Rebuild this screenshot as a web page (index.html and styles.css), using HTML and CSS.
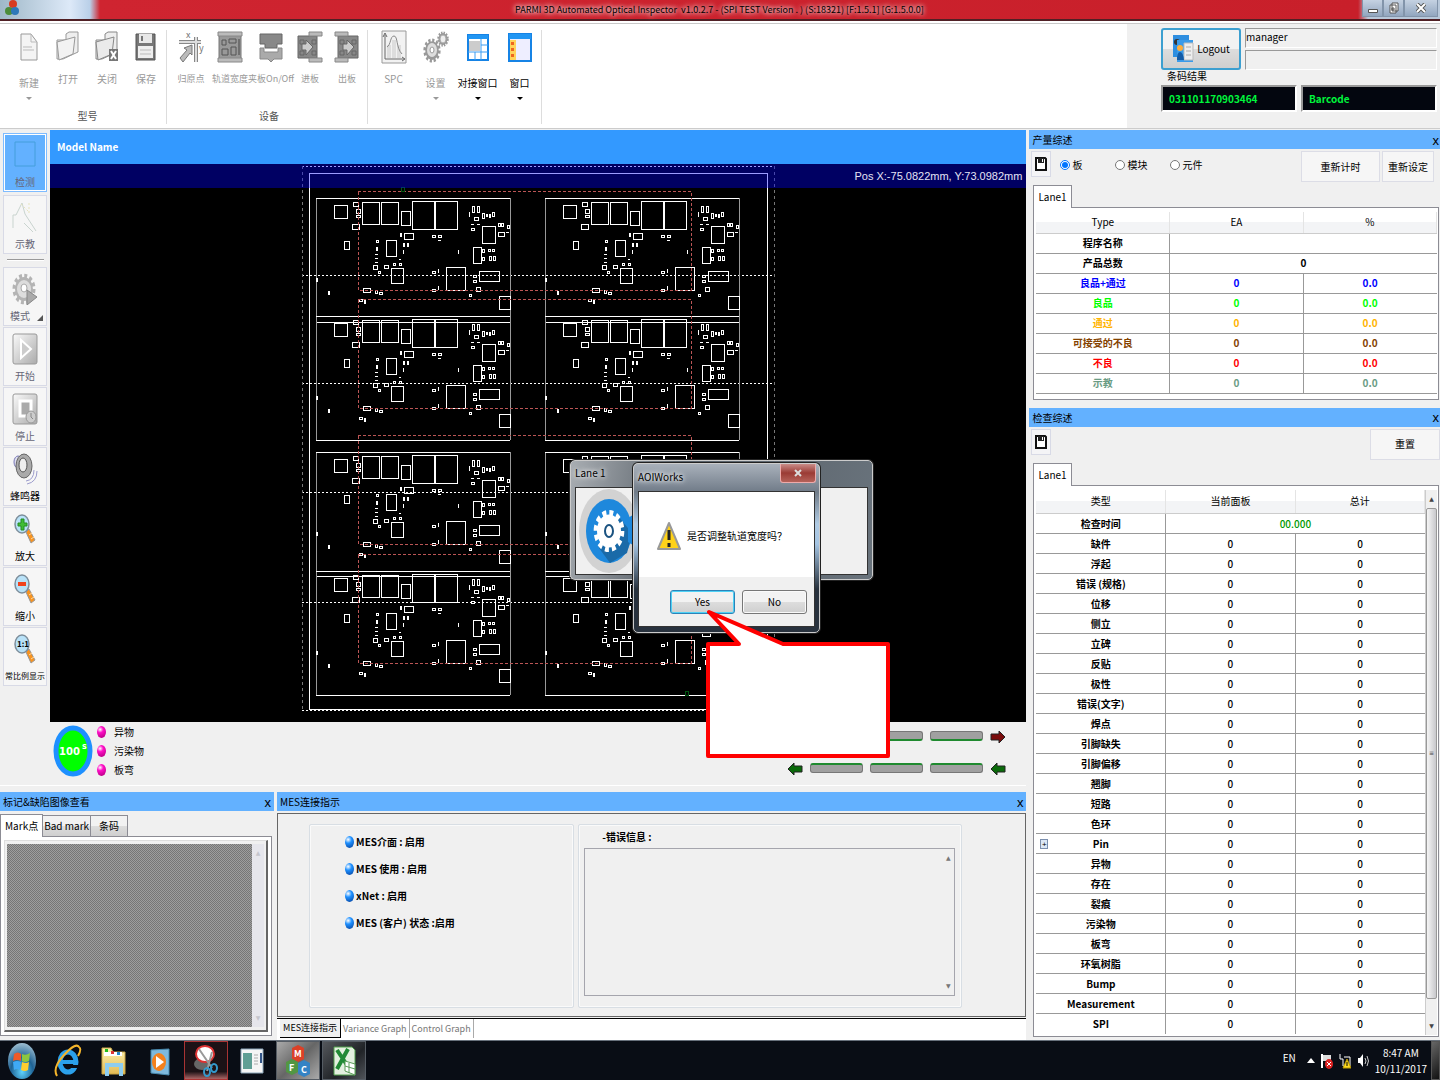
FILE: index.html
```html
<!DOCTYPE html>
<html lang="zh-CN">
<head>
    <meta charset="UTF-8">
    <title>PARMI 3D Automated Optical Inspector</title>
    <link rel="stylesheet" href="styles.css">
</head>
<body>
    <svg class="defs" aria-hidden="true">
        <defs>
            <linearGradient id="gray" x1="0" y1="0" x2="1" y2="1"><stop offset="0" stop-color="#fafafa"/><stop offset="1" stop-color="#aaa"/></linearGradient>
            <linearGradient id="folder" x1="0" y1="0" x2="0" y2="1"><stop offset="0" stop-color="#fff3b0"/><stop offset="1" stop-color="#e3bb55"/></linearGradient>
            <radialGradient id="orb" cx=".5" cy=".8" r=".8"><stop offset="0" stop-color="#5fd4ff"/><stop offset=".5" stop-color="#1e6294"/><stop offset="1" stop-color="#9dbdd0"/></radialGradient>
            <symbol id="gear" viewBox="0 0 24 24" preserveAspectRatio="none">
                <circle cx="12" cy="12" r="9.5" fill="none" stroke-width="4" stroke-dasharray="2.8 2.17" stroke="currentColor"/>
                <circle cx="12" cy="12" r="6" fill="none" stroke-width="6" stroke="currentColor"/>
            </symbol>
            <symbol id="lens" viewBox="0 0 22 30">
                <path d="M12 18l3-3 6 11-4 3z" fill="#f79320" stroke="#999" />
                <path d="M15 21l3-2M17 25l3-2" stroke="#ffd9a0"/>
                <ellipse cx="8" cy="10" rx="7" ry="9" fill="#b9e2f8" stroke="#7d8e9b" stroke-width="1.500"/>
            </symbol>
            <symbol id="disk" viewBox="0 0 12 16">
                <path d="M1 2h9l1 1v11H1z" fill="#fff" stroke="#111" stroke-width="2"/>
                <path d="M3 2h6v5H3z" fill="#222"/><path d="M7 3h1v3H7z" fill="#fff"/>
            </symbol>
            <!-- one board module, repeated over the panel -->
            <g id="module" fill="none" stroke="#fff">
                <path stroke="#999" d="M316 198v124M510 198v124"/>
                <path d="M316 198h194M316 322h194"/>
                <path d="M334 205h13v13h-13zM353 202h5v4h-5zM356 209h4v4h-4zM356 215h4v2h-4zM352 224h7v5h-7zM362 202h17v22h-17zM381 202h17v22h-17zM401 211h9v14h-9zM412 201h22v28h-22zM435 201h22v28h-22zM404 233h9v6h-9zM400 233h1v3h-1zM386 240h10v16h-10zM344 241h5v8h-5z"/>
                <path d="M376 240h2v2h-2zM376 247h1v3h-1zM375 254h3M375 258h3M375 262h3M373 265h4v4h-4zM384 265h4v3h-4zM378 271h2v2h-2zM393 263h2v2h-2zM399 259h2M399 263h2v2h-2zM391 268h12v15h-12zM403 243h1v3h-1zM407 243h1v3h-1zM403 250v4M432 235h3v2h-3zM438 235h3v2h-3zM438 240h3M458 250v4"/>
                <path d="M469 212v5M472 206h2v6h-2zM477 206h2v6h-2zM474 217h4v3h-4zM482 213h2v5h-2zM486 214h1v2h-1zM489 214h1v3h-1zM492 212h2v4h-2zM471 224h3M477 224h3M471 228h3v2h-3zM482 226h13v17h-13zM498 223h2v3h-2zM501 223h2v3h-2zM498 232h6v4h-6zM507 225h2v3h-2zM506 232h3"/>
                <path d="M473 247h8v16h-8zM482 249h2v3h-2zM488 249h2v2h-2zM492 249h2v2h-2zM482 257h2v3h-2zM489 256h2v4h-2zM493 256h2v4h-2zM479 271h20v10h-20zM473 275h3v2h-3zM473 280h3v2h-3zM446 267h19v23h-19zM432 271h3v2h-3zM438 269v4M432 289h3v2h-3zM438 286v4M476 287h4v4h-4zM469 294h2v2h-2zM499 296h11v13h-11z"/>
                <path d="M363 288h7v4h-7zM375 290h2v3h-2zM379 292h3v2h-3zM359 299h3v2h-3zM364 300h1v3h-1zM316 278h1v3h-1zM328 291h1v3h-1z"/>
            </g>
            <symbol id="arrow" viewBox="0 0 16 12"><path d="M1 3h8V0l6 6-6 6V9H1z" fill="currentColor" stroke="#222"/></symbol>
        </defs>
    </svg>

    <header class="titlebar">
        <svg class="app-logo" width="14" height="16"><circle cx="8" cy="4" r="4" fill="#d83c20"/><circle cx="4" cy="11" r="4" fill="#4c8c3a"/><circle cx="10" cy="11" r="4" fill="#2e78b8"/></svg>
        <h1>PARMI 3D Automated Optical Inspector &nbsp;v1.0.2.7 - (SPI TEST Version . ) (S:18321) [F:1.5.1] [G:1.5.0.0]</h1>
        <div class="window-buttons">
            <button aria-label="Minimize"><svg width="10" height="10"><path d="M.5 6.500h9v3h-9z" fill="#fff" stroke="#555"/></svg></button>
            <button aria-label="Restore"><svg width="10" height="12"><path d="M3 1h6v8H3zM1 3h6v8H1zM3 6h2v2H3z" fill="#fff" stroke="#555"/></svg></button>
            <button class="wide" aria-label="Close"><svg width="10" height="10"><path d="M1 1l8 8M9 1l-8 8" stroke="#555" stroke-width="4"/><path d="M1 1l8 8M9 1l-8 8" stroke="#fff" stroke-width="2"/></svg></button>
        </div>
    </header>

    <div class="ribbon">
        <div class="ribbon-group">
            <div class="tools">
                <button class="tool drop" disabled><svg width="24" height="34"><path d="M4 4h10l6 8v18H4z" fill="#f4f4f4" stroke="#999"/><path d="M14 4v8h6M6 17h9M6 20h11" fill="none" stroke="#bbb"/></svg>新建</button>
                <button class="tool" disabled><svg width="24" height="34"><path d="M1 10h9V4l3-2h9v20L7 29H1z" fill="#eee" stroke="#999"/><path d="M1 12l18-5-2 17L3 30z" fill="#f2f2f2" stroke="#999"/></svg>打开</button>
                <button class="tool" disabled><svg width="24" height="34"><path d="M1 10h9V4l3-2h9v20L7 29H1z" fill="#eee" stroke="#888"/><path d="M1 12l18-5-2 17L3 30z" fill="#eaeaea" stroke="#888"/><path d="M14 19h9v12h-9z" fill="#777"/><path d="M16 21l5 8M21 21l-5 8" stroke="#fff" stroke-width="2"/></svg>关闭</button>
                <button class="tool" disabled><svg width="24" height="34"><path d="M2 4h19v26H2z" fill="#777" stroke="#555"/><path d="M5 4h13v9H5z" fill="#e8e8e8"/><path d="M7 6h2v5H7z" fill="#777"/><path d="M4 16h15v12H4z" fill="#eee"/><path d="M6 20h11M6 24h11" stroke="#bbb"/></svg>保存</button>
            </div>
            <h2>型号</h2>
        </div>
        <div class="ribbon-group devices">
            <div class="tools">
                <button class="tool" disabled><svg width="26" height="34"><path d="M1 12h22M18 7v25" stroke="#888" stroke-width="4"/><path d="M1 12h22M18 7v25" stroke="#ddd" stroke-width="2"/><path d="M2 28l7-8-3-2 8-3v10l-2-2-7 9z" fill="#bbb" stroke="#777"/><text x="8" y="8" class="axis">x</text><text x="21" y="21" class="axis">y</text></svg>归原点</button>
                <button class="tool" disabled><svg width="26" height="34"><path d="M2 5h22v25H2z" fill="#999" stroke="#777"/><path d="M1 2h24v4H1zM1 28h24v4H1z" fill="#bbb" stroke="#888"/><path d="M5 10h4v5H5zM12 9h7v4h-7zM5 19h6v6H5zM14 17h5v8h-5z" fill="none" stroke="#555"/><path d="M22 9v16" stroke="#444"/></svg>轨道宽度</button>
                <button class="tool" disabled><svg width="26" height="34"><path d="M2 4h22v10h-5v4H7v-4H2z" fill="#888" stroke="#666"/><path d="M2 18h4v4h14v-4h4v11h-8l-3 3-3-3H2z" fill="#aaa" stroke="#888"/></svg>夹板On/Off</button>
                <button class="tool" disabled><svg width="26" height="34"><path d="M1 6h19v22H1z" fill="#888" stroke="#666"/><path d="M12 2h13v4H12zM12 28h13v4H12z" fill="#bbb" stroke="#888"/><path d="M3 10h4v4H3zM15 10h4v4h-4zM3 21h4v4H3zM15 21h4v4h-4z" fill="none" stroke="#666"/><path d="M5 14h4v-4l7 7-7 8v-5H5z" fill="#ccc" stroke="#666"/></svg>进板</button>
                <button class="tool" disabled><svg width="26" height="34"><path d="M4 6h20v22H4z" fill="#888" stroke="#666"/><path d="M1 2h13v4H1zM1 28h13v4H1z" fill="#bbb" stroke="#888"/><path d="M6 10h4v4H6zM18 10h4v4h-4zM6 21h4v4H6zM18 21h4v4h-4z" fill="none" stroke="#666"/><path d="M9 14h4v-4l7 7-7 8v-5H9z" fill="#ccc" stroke="#666"/></svg>出板</button>
            </div>
            <h2>设备</h2>
        </div>
        <div class="ribbon-group">
            <div class="tools">
                <button class="tool" disabled><svg width="26" height="34"><path d="M1 1h24v32H1z" fill="#f2f2f2" stroke="#999"/><path d="M4 5v24h19" fill="none" stroke="#666"/><path d="M2 7l2-4 2 4M21 27l3 2-3 2" fill="none" stroke="#666"/><path d="M6 15h4v13H6zM11 10h4v18h-4zM16 15h4v13h-4z" fill="#ddd"/><path d="M6 17c4-2 3-11 7-11s2 12 8 18" fill="none" stroke="#888"/></svg>SPC</button>
                <button class="tool drop" disabled><svg width="26" height="34" color="#999"><use href="#gear" x="0" y="8" width="18" height="25"/><use href="#gear" x="14" y="1" width="12" height="16"/><ellipse cx="9" cy="20" rx="5" ry="7" fill="#ddd"/><ellipse cx="9" cy="20" rx="2" ry="3" fill="#fff" stroke="#999"/><ellipse cx="20" cy="9" rx="3" ry="4" fill="#eee" stroke="#aaa"/></svg>设置</button>
                <button class="tool drop"><svg width="24" height="34"><path d="M2 5h20v25H2z" fill="#fff" stroke="#1683e5" stroke-width="2"/><path d="M2 5h20v4H2z" fill="#2196f3"/><path d="M9 22v8M15 9v21M15 15h7M2 22h20" stroke="#3d9df2"/><path d="M3 11h11v10H3z" fill="#ccc"/></svg>对接窗口</button>
                <button class="tool drop"><svg width="24" height="34"><path d="M1 4h22v27H1z" fill="#eef" stroke="#1683e5" stroke-width="2"/><path d="M1 4h22v5H1z" fill="#2196f3"/><path d="M2 10h6v20H2z" fill="#ffd35a"/><path d="M3 12h3v3H3zM3 18h3v3H3zM3 24h3v3H3z" fill="#ef6520"/></svg>窗口</button>
            </div>
        </div>
        <div class="session">
            <div class="session-row">
                <button class="logout"><svg width="22" height="30"><path d="M1 1h16v22H1z" fill="#2e8ee0"/><circle cx="5" cy="8" r="3" fill="#333"/><path d="M5 6h16v22H5z" fill="#3a9bea"/><path d="M12 9h9v17h-9z" fill="#eee" stroke="#bbb"/><path d="M14 13h5M14 17h5M14 21h5" stroke="#aaa"/><circle cx="8" cy="14" r="3" fill="#ffae3a"/><path d="M5 26q0-8 3-8t4 8z" fill="#135ca8"/></svg>Logout</button>
                <div class="session-fields">
                    <input type="text" value="manager" aria-label="User" readonly>
                    <input type="text" aria-label="Group" readonly>
                </div>
            </div>
            <label for="barcode">条码结果</label>
            <div class="session-row">
                <input class="barcode" id="barcode" type="text" value="031101170903464" readonly>
                <input class="barcode" type="text" value="Barcode" aria-label="Barcode" readonly>
            </div>
        </div>
    </div>

    <main>
        <div class="left">
            <div class="workspace">
                <nav class="sidebar">
                    <button class="active" disabled><svg width="26" height="32"><path d="M3 3h20v24H3z" fill="none" stroke="#459edb"/></svg>检测</button>
                    <button disabled><svg width="26" height="32"><path d="M1 27V14h3l6-12 3 11 11 17M12 22l9 9" fill="none" stroke="#c9d4cf"/><path d="M9 3l7 7M17 2v11" stroke="#e7e4bd" stroke-dasharray="2 2"/></svg>示教</button>
                    <hr>
                    <button class="more" disabled><svg width="26" height="32" color="#b4b4b4"><use href="#gear" width="24" height="32"/><ellipse cx="12" cy="16" rx="7" ry="9" fill="#ddd"/><ellipse cx="12" cy="15" rx="3" ry="4" fill="#fff" stroke="#aaa"/><path d="M15 17l10 7-10 8z" fill="#aaa" stroke="#888"/></svg>模式</button>
                    <button disabled><svg width="26" height="32"><rect x="1" y="1" width="24" height="30" rx="2" fill="url(#gray)" stroke="#999"/><path d="M9 7l10 9-10 9z" fill="#ccc" stroke="#fff" stroke-width="2"/></svg>开始</button>
                    <button disabled><svg width="26" height="32"><rect x="1" y="1" width="24" height="30" rx="2" fill="url(#gray)" stroke="#999"/><path d="M8 8h11v15H8z" fill="#aaa" stroke="#fff" stroke-width="3"/><ellipse cx="19" cy="24" rx="5" ry="6" fill="#ccc" stroke="#999"/><path d="M19 20v4l2 2" fill="none" stroke="#888"/></svg>停止</button>
                    <button><svg width="26" height="32"><ellipse cx="6" cy="9" rx="4" ry="6" fill="#dde" stroke="#7777b5"/><ellipse cx="12" cy="13" rx="8" ry="12" fill="#aaa" stroke="#666"/><ellipse cx="11" cy="12" rx="4" ry="7" fill="#eee" stroke="#555"/><path d="M14 28q8-1 8-11M15 31q10-2 10-13" fill="none" stroke="#9c9ccc"/></svg>蜂鸣器</button>
                    <button><svg width="26" height="32"><use href="#lens" x="2" y="1" width="22" height="30"/><path d="M9 6h3v4h3v3h-3v4H9v-4H6v-3h3z" fill="#3fbc35" stroke="#278c22"/></svg>放大</button>
                    <button><svg width="26" height="32"><use href="#lens" x="2" y="1" width="22" height="30"/><path d="M6 9h8v4H6z" fill="#f0431e"/></svg>缩小</button>
                    <button class="long"><svg width="26" height="32"><use href="#lens" x="2" y="1" width="22" height="30"/><text x="5" y="14" class="ratio">1:1</text></svg>常比例显示</button>
                </nav>
                <section class="view">
                    <h2 class="model-name">Model Name</h2>
                    <div class="board">
                        <svg viewBox="50 164 976 558" shape-rendering="crispEdges">
                            <g fill="none" stroke="#fff">
                                <path d="M302 166h472M302 710h472M302 275h472M302 383h472M302 492h472M302 602h472" stroke-dasharray="2 2"/>
                                <path d="M302 166v544M774 166v544" stroke="#777" stroke-dasharray="3 3"/>
                                <path d="M309 173h458v536H309z"/>
                            </g>
                            <use href="#module"/>
                            <use href="#module" x="229"/>
                            <use href="#module" y="118"/>
                            <use href="#module" x="229" y="118"/>
                            <use href="#module" y="254"/>
                            <use href="#module" x="229" y="254"/>
                            <use href="#module" y="373"/>
                            <use href="#module" x="229" y="373"/>
                            <path d="M358 191h333v99H358zM358 299h333v109H358zM358 435h333v109H358zM358 554h333v109H358z" fill="none" stroke="#b55" stroke-dasharray="3 2"/>
                            <path d="M401 187h3v4h-3zM685 691h3v4h-3z" fill="none" stroke="#051"/>
                        </svg>
                        <p class="position">Pos X:-75.0822mm, Y:73.0982mm</p>

                        <div class="window lane-window">
                            <h3>Lane 1</h3>
                            <div class="window-body">
                                <svg width="70" height="86"><ellipse cx="33" cy="43" rx="30" ry="42" fill="#d2d2d2"/><ellipse cx="33" cy="43" rx="23" ry="32" fill="#1e88dc"/><path d="M42 28l14 17-5 20-17 10-11-15z" fill="#1a6aa8"/><path d="M52 30l8-5v34l-8-5z" fill="#1e88dc"/><g color="#fff"><use href="#gear" x="17" y="21" width="32" height="44"/></g><ellipse cx="33" cy="43" rx="8" ry="11" fill="#fff"/><ellipse cx="33" cy="43" rx="4" ry="6" fill="#fff" stroke="#1a5280" stroke-width="2"/></svg>
                            </div>
                        </div>
                        <div class="window dialog" role="dialog" aria-label="AOIWorks">
                            <h3>AOIWorks</h3>
                            <button class="dialog-close" aria-label="Close"><svg width="8" height="8"><path d="M1 1l6 6M7 1L1 7" stroke="#ddd" stroke-width="2"/></svg></button>
                            <div class="window-body">
                                <div class="message">
                                    <svg width="24" height="30"><path d="M12 2L23 28H1z" fill="#ffd21a" stroke="#999" stroke-width="2" stroke-linejoin="round"/><path d="M12 9v10M12 22v4" stroke="#222" stroke-width="3"/></svg>
                                    <span>是否调整轨道宽度吗？</span>
                                </div>
                                <div class="dialog-actions">
                                    <button class="default">Yes</button>
                                    <button>No</button>
                                </div>
                            </div>
                        </div>
                        <svg class="callout" width="184" height="150"><path d="M2 36h31L3 4l74 32h105v112H2z" fill="#fff" stroke="red" stroke-width="4" stroke-linejoin="round"/></svg>
                    </div>
                    <div class="status">
                        <svg class="gauge" width="40" height="54"><ellipse cx="20" cy="27" rx="17" ry="23" fill="#0f0" stroke="#1e90ff" stroke-width="5"/><text x="6" y="31">100</text><text x="29" y="25" class="unit">s</text></svg>
                        <ul class="defects">
                            <li>异物</li>
                            <li>污染物</li>
                            <li>板弯</li>
                        </ul>
                        <div class="conveyor">
                            <div class="lane out"><i></i><i></i><i></i><svg width="16" height="12" color="#7a0c0c"><use href="#arrow"/></svg></div>
                            <div class="lane in"><svg class="flip" width="16" height="12" color="#0a6a0a"><use href="#arrow"/></svg><i></i><i></i><i></i><svg class="flip" width="16" height="12" color="#0a6a0a"><use href="#arrow"/></svg></div>
                        </div>
                    </div>
                </section>
            </div>

            <div class="dock">
                <section class="panel">
                    <div class="panel-title"><h2>标记&amp;缺陷图像查看</h2><button aria-label="Close">x</button></div>
                    <div class="tabs">
                        <button class="tab active">Mark点</button><button class="tab">Bad mark</button><button class="tab">条码</button>
                    </div>
                    <div class="mark-page">
                        <div class="mark-view"><div class="hatch"></div><div class="scroll pale"><span>▲</span><span>▼</span></div></div>
                    </div>
                </section>
                <section class="panel">
                    <div class="panel-title"><h2>MES连接指示</h2><button aria-label="Close">x</button></div>
                    <div class="mes-page">
                        <ul class="mes-status">
                            <li>MES介面 : 启用</li>
                            <li>MES 使用 : 启用</li>
                            <li>xNet : 启用</li>
                            <li>MES (客户) 状态 :启用</li>
                        </ul>
                        <div class="mes-errors">
                            <label for="errors">-错误信息 :</label>
                            <div class="error-box"><textarea id="errors" readonly></textarea><div class="scroll"><span>▲</span><span>▼</span></div></div>
                        </div>
                    </div>
                    <div class="bottom-tabs">
                        <button class="active">MES连接指示</button><button>Variance Graph</button><button>Control Graph</button>
                    </div>
                </section>
            </div>
        </div>

        <div class="right">
            <section class="panel">
                <div class="panel-title"><h2>产量综述</h2><button aria-label="Close">x</button></div>
                <div class="panel-tools">
                    <button class="save" aria-label="Save"><svg width="12" height="16"><use href="#disk"/></svg></button>
                    <label><input type="radio" name="unit" checked>板</label>
                    <label><input type="radio" name="unit">模块</label>
                    <label><input type="radio" name="unit">元件</label>
                    <button class="flat">重新计时</button>
                    <button class="flat narrow">重新设定</button>
                </div>
                <div class="tabs lane-tabs"><button class="tab active">Lane1</button></div>
                <div class="table-page yield-page">
                    <table>
                        <thead><tr><th>Type</th><th>EA</th><th>%</th></tr></thead>
                        <tbody>
                            <tr><th>程序名称</th><td colspan="2"></td></tr>
                            <tr><th>产品总数</th><td colspan="2">0</td></tr>
                            <tr class="blue"><th>良品+通过</th><td>0</td><td>0.0</td></tr>
                            <tr class="green"><th>良品</th><td>0</td><td>0.0</td></tr>
                            <tr class="amber"><th>通过</th><td>0</td><td>0.0</td></tr>
                            <tr class="brown"><th>可接受的不良</th><td>0</td><td>0.0</td></tr>
                            <tr class="red"><th>不良</th><td>0</td><td>0.0</td></tr>
                            <tr class="teal"><th>示教</th><td>0</td><td>0.0</td></tr>
                        </tbody>
                    </table>
                </div>
            </section>
            <section class="panel grow">
                <div class="panel-title"><h2>检查综述</h2><button aria-label="Close">x</button></div>
                <div class="panel-tools">
                    <button class="save" aria-label="Save"><svg width="12" height="16"><use href="#disk"/></svg></button>
                    <button class="flat last">重置</button>
                </div>
                <div class="tabs lane-tabs"><button class="tab active">Lane1</button></div>
                <div class="table-page check-page">
                    <table>
                        <thead><tr><th>类型</th><th>当前面板</th><th>总计</th></tr></thead>
                        <tbody>
                            <tr class="time"><th>检查时间</th><td colspan="2">00.000</td></tr>
                            <tr><th>缺件</th><td>0</td><td>0</td></tr>
                            <tr><th>浮起</th><td>0</td><td>0</td></tr>
                            <tr><th>错误 (规格)</th><td>0</td><td>0</td></tr>
                            <tr><th>位移</th><td>0</td><td>0</td></tr>
                            <tr><th>侧立</th><td>0</td><td>0</td></tr>
                            <tr><th>立碑</th><td>0</td><td>0</td></tr>
                            <tr><th>反贴</th><td>0</td><td>0</td></tr>
                            <tr><th>极性</th><td>0</td><td>0</td></tr>
                            <tr><th>错误(文字)</th><td>0</td><td>0</td></tr>
                            <tr><th>焊点</th><td>0</td><td>0</td></tr>
                            <tr><th>引脚缺失</th><td>0</td><td>0</td></tr>
                            <tr><th>引脚偏移</th><td>0</td><td>0</td></tr>
                            <tr><th>翘脚</th><td>0</td><td>0</td></tr>
                            <tr><th>短路</th><td>0</td><td>0</td></tr>
                            <tr><th>色环</th><td>0</td><td>0</td></tr>
                            <tr><th class="expandable"><button aria-label="Expand">+</button>Pin</th><td>0</td><td>0</td></tr>
                            <tr><th>异物</th><td>0</td><td>0</td></tr>
                            <tr><th>存在</th><td>0</td><td>0</td></tr>
                            <tr><th>裂痕</th><td>0</td><td>0</td></tr>
                            <tr><th>污染物</th><td>0</td><td>0</td></tr>
                            <tr><th>板弯</th><td>0</td><td>0</td></tr>
                            <tr><th>环氧树脂</th><td>0</td><td>0</td></tr>
                            <tr><th>Bump</th><td>0</td><td>0</td></tr>
                            <tr><th>Measurement</th><td>0</td><td>0</td></tr>
                            <tr><th>SPI</th><td>0</td><td>0</td></tr>
                        </tbody>
                    </table>
                    <div class="scroll dark"><span>▲</span><div class="thumb">≡</div><span>▼</span></div>
                </div>
            </section>
        </div>
    </main>

    <footer class="taskbar">
        <button aria-label="Start"><svg width="30" height="38"><ellipse cx="15" cy="19" rx="14" ry="18" fill="url(#orb)"/><path d="M7 12q4-3 7 0v7q-4-2-8 0z" fill="#ef5a28"/><path d="M15 12q4 2 8-1l-1 8q-4 2-7 0z" fill="#8cc63f"/><path d="M6 20q4-2 8 0l-1 8q-3-2-6 0z" fill="#3fa9f5"/><path d="M15 20q4 2 7 0l-1 8q-3 2-7 0z" fill="#ffce2e"/></svg></button>
        <button aria-label="Internet Explorer"><svg width="28" height="34"><ellipse cx="14" cy="18" rx="8" ry="10" fill="none" stroke="#2ba0ea" stroke-width="5"/><path d="M7 18h15" stroke="#2ba0ea" stroke-width="4"/><path d="M17 21h9v3h-9z" fill="#0a0d14"/><path d="M3 32q-5-8 7-21T25 3q3 2-1 9" fill="none" stroke="#f5b52b" stroke-width="2"/></svg></button>
        <button aria-label="Explorer"><svg width="28" height="34"><path d="M2 4h9l2 4h12v22H2z" fill="url(#folder)" stroke="#c9a545"/><path d="M4 8h18v4H4z" fill="#fff"/><path d="M5 5h3v3H5z" fill="#2b2"/><path d="M11 7h3v3h-3z" fill="#d33"/><path d="M17 8h3v3h-3z" fill="#28c"/><path d="M7 32V21h14v11" fill="none" stroke="#8ecdf0" stroke-width="4"/></svg></button>
        <button aria-label="Media Player"><svg width="28" height="34"><path d="M5 6l18-1v26l-18-2z" fill="#7eb9dd" stroke="#4788ad"/><ellipse cx="13" cy="18" rx="7" ry="9" fill="#f3801c"/><path d="M10 12l8 6-8 6z" fill="#fff"/></svg></button>
        <button class="alert" aria-label="Snipping Tool"><svg width="28" height="34"><ellipse cx="10" cy="20" rx="8" ry="6" fill="#666"/><ellipse cx="13" cy="10" rx="9" ry="8" fill="#fff" stroke="#d33" stroke-width="2"/><path d="M7 5l13 19M20 8l-5 19" stroke="#999" stroke-width="2"/><ellipse cx="15" cy="28" rx="3" ry="4" fill="none" stroke="#39c" stroke-width="2"/><ellipse cx="22" cy="24" rx="3" ry="4" fill="none" stroke="#39c" stroke-width="2"/></svg></button>
        <button aria-label="Viewer"><svg width="28" height="34"><path d="M3 5h22v24H3z" fill="#f5f5f5" stroke="#8ba5b9"/><path d="M5 9h9v16H5z" fill="#5f9e94"/><path d="M16 11h4M16 14h4M16 17h4M16 20h4" stroke="#aaa"/><path d="M22 9h2v10h-2z" fill="#358"/></svg></button>
        <button class="open light" aria-label="AOIWorks"><svg width="28" height="34"><path d="M8 4l6-3 6 3v11l-6 3-6-3z" fill="#db4128"/><path d="M2 18l6-3 6 3v10l-6 3-6-3z" fill="#529643"/><path d="M14 19l6-3 6 3v11l-6 3-6-3z" fill="#3483c4"/><g class="cubes"><text x="10" y="13">M</text><text x="5" y="27">F</text><text x="17" y="29">C</text></g></svg></button>
        <button class="open" aria-label="Excel"><svg width="28" height="34"><path d="M4 3h18l3 3v25H4z" fill="#e3f0df" stroke="#51a04c"/><path d="M7 6l12 18M18 5L7 25" stroke="#218a35" stroke-width="4"/><path d="M15 17l10 3v11l-10-4zM15 22l10 3M19 19v10" fill="#fff" stroke="#5a9c58"/></svg></button>
        <div class="tray">
            <span>EN</span>
            <svg width="8" height="5"><path d="M4 0l4 5H0z" fill="#fff"/></svg>
            <svg width="12" height="16"><path d="M1 1v14" stroke="#fff" stroke-width="2"/><path d="M2 2h8v6H2z" fill="#ddd"/><ellipse cx="8" cy="11" rx="4" ry="5" fill="#d22"/><path d="M6 9l4 4M10 9l-4 4" stroke="#fff"/></svg>
            <svg width="12" height="16"><path d="M1 1v5h3v7h7V4H5" fill="none" stroke="#fff"/><path d="M8 6l4 9H4z" fill="#ffdb22" stroke="#b90"/><path d="M8 9v4" stroke="#000"/></svg>
            <svg width="12" height="16"><path d="M1 5h2l3-4v13l-3-4H1z" fill="#fff"/><path d="M8 5q2 3 0 6M10 3q3 5 0 10" fill="none" stroke="#ccc"/></svg>
            <div class="clock"><time>8:47 AM</time><time>10/11/2017</time></div>
        </div>
        <div class="show-desktop"></div>
    </footer>
</body>
</html>
```

FILE: styles.css
```css
* {
    box-sizing: border-box;
}
body {
    margin: 0;
    min-height: 100vh;
    display: flex;
    flex-direction: column;
    background: #f0f0f0;
    color: #000;
    font-family: "Noto Sans CJK SC", "Liberation Sans", sans-serif;
    font-size: 10px;
    line-height: 16px;
}
button, input, textarea {
    font: inherit;
    color: inherit;
    margin: 0;
    padding: 0;
}
button {
    white-space: nowrap;
}
h1, h2, h3, p, ul {
    margin: 0;
    padding: 0;
    font-size: inherit;
    font-weight: normal;
    list-style: none;
}
svg {
    display: block;
    flex-shrink: 0;
}
.defs {
    position: absolute;
    width: 0;
    height: 0;
}

/* title bar */
.titlebar {
    height: 24px;
    display: flex;
    align-items: flex-start;
    background: linear-gradient(90deg, #9fb8c8 0, #dde9f8 70px, #b9cfe8 90px, #cf2430 100px, #c81f2a 1358px, #b8c8da 1368px);
    border-bottom: 1px solid #c8c8c8;
    box-shadow: inset 0 -2px #fff, inset 0 -4px #502025;
}
.app-logo {
    margin-left: 5px;
}
.titlebar h1 {
    flex: 1;
    padding: 2px 0 2px 58px;
    text-align: center;
    font-size: 9px;
    text-shadow: 0 0 4px #fff, 0 0 6px #fff;
}
.window-buttons {
    display: flex;
    margin-right: 2px;
}
.window-buttons button {
    width: 21px;
    height: 17px;
    display: grid;
    place-items: center;
    border: 1px solid #8294aa;
    border-top: 0;
    background: linear-gradient(#c5d2e2, #92a6bf);
}
.window-buttons .wide {
    width: 34px;
}

/* ribbon */
.ribbon {
    height: 105px;
    display: flex;
    background: #fff;
    border-bottom: 1px solid #ccc;
}
.ribbon-group {
    display: flex;
    flex-direction: column;
    padding: 0 1px 0 5px;
    margin: 6px 0 4px;
    border-right: 1px solid #ddd;
}
.ribbon-group:first-child {
    padding-left: 10px;
}
.tools {
    display: flex;
    flex: 1;
    gap: 1px;
}
.tool {
    width: 38px;
    display: flex;
    flex-direction: column;
    align-items: center;
    align-self: flex-start;
    border: 0;
    background: none;
}
.tool svg {
    margin-bottom: 7px;
}
.tool:disabled {
    color: #999;
}
.tool.drop svg {
    margin-bottom: 11px;
}
.tool.drop::after {
    content: "";
    margin-top: 6px;
    border: 3px solid transparent;
    border-top-color: currentColor;
    border-bottom: 0;
}
.devices .tool {
    font-size: 9px;
}
.devices .tool:nth-child(3) {
    width: 42px;
}
.devices .tool:nth-child(4) {
    width: 34px;
}
.ribbon-group:nth-child(3) .tool {
    width: 41px;
}
.axis {
    font-size: 9px;
    fill: #777;
}
.ribbon-group h2 {
    text-align: center;
    color: #555;
}
.session {
    width: 313px;
    margin-left: auto;
    padding: 4px 3px 0 34px;
    background: #f0f0f0;
}
.session-row {
    display: flex;
    gap: 4px;
}
.session label {
    display: block;
    margin: -2px 0 1px 6px;
}
.logout {
    width: 80px;
    height: 42px;
    display: flex;
    align-items: center;
    justify-content: center;
    gap: 3px;
    border: 2px solid #3c9fd0;
    border-radius: 3px;
    background: linear-gradient(#f2f2f2 50%, #ddd 50%, #cfcfcf);
}
.session-fields {
    flex: 1;
    display: grid;
    gap: 2px;
}
.session-fields input {
    width: 100%;
    height: 20px;
    padding-bottom: 4px;
    border: 1px solid;
    border-color: #999 #fff #fff #999;
    background: #f0f0f0;
}
.barcode {
    flex: 1;
    min-width: 0;
    height: 27px;
    padding: 0 6px;
    border: 2px solid;
    border-color: #999 #fff #fff #999;
    background: #03060f;
    color: #00f53c;
    font-weight: bold;
}

/* main split */
main {
    flex: 1;
    display: grid;
    grid-template-columns: 5fr 2fr;
    gap: 3px;
    padding-top: 1px;
}
.left, .right {
    display: flex;
    flex-direction: column;
    min-width: 0;
}
.workspace {
    flex: 1;
    display: flex;
    border-bottom: 1px solid #fff;
    margin-bottom: 6px;
}
.sidebar {
    width: 50px;
    padding: 3px 3px 0;
    display: flex;
    flex-direction: column;
    gap: 1px;
}
.sidebar button {
    width: 44px;
    height: 59px;
    display: flex;
    flex-direction: column;
    align-items: center;
    justify-content: flex-end;
    gap: 3px;
    position: relative;
    border: 1px solid #d8dae6;
    background: #f6f6f6;
    padding-bottom: 1px;
}
.sidebar button:disabled {
    color: #667;
}
.sidebar .active {
    margin-bottom: 2px;
    background: #63b1ff;
    border-color: #7fbcff;
    box-shadow: inset 0 0 0 1px #fff;
}
.sidebar .long {
    font-size: 8px;
}
.sidebar hr {
    width: 37px;
    margin: 4px auto 5px;
    border: 0;
    border-top: 1px solid #999;
    border-bottom: 1px solid #fff;
}
.sidebar .more {
    padding-right: 10px;
}
.more svg {
    margin-left: 10px;
}
.more::after {
    content: "";
    position: absolute;
    right: 3px;
    bottom: 4px;
    border: 3px solid #555;
    border-top-color: transparent;
    border-left-color: transparent;
}
.ratio {
    font-size: 8px;
    font-weight: bold;
}
.view {
    flex: 1;
    min-width: 0;
    display: flex;
    flex-direction: column;
}
.model-name {
    height: 34px;
    padding: 9px 7px;
    background: #39f;
    color: #fff;
    font-size: 10px;
    font-weight: bold;
}
.board {
    position: relative;
    flex: 1;
    background: #000;
}
.board > svg:first-child {
    position: absolute;
    width: 100%;
    height: 100%;
}
.position {
    position: absolute;
    inset: 0 0 auto;
    height: 24px;
    padding: 4px;
    background: rgba(0, 0, 255, 0.39);
    color: #e4e4f5;
    font-family: "Liberation Sans", sans-serif;
    font-size: 11px;
    text-align: right;
}

/* floating windows */
.window {
    position: absolute;
    display: flex;
    flex-direction: column;
    border: 1px solid #ccc;
    border-radius: 5px;
    background: linear-gradient(100deg, #a8adb2, #586068 35%, #69737c);
    box-shadow: 0 0 0 1px #222;
}
.window h3 {
    text-shadow: 0 0 4px #fff, 0 0 7px #fff;
}
.window-body {
    flex: 1;
    border: 1px solid #333;
    background: #f0f0f0;
}
.lane-window {
    left: 520px;
    top: 296px;
    width: 303px;
    height: 120px;
    padding: 0 4px 4px;
}
.lane-window h3 {
    padding: 4px 0 6px;
}
.dialog {
    left: 583px;
    top: 299px;
    width: 187px;
    height: 170px;
    padding: 0 4px 5px;
    background: linear-gradient(#a9b1bb, #707b88 28px, #b0cbe4 60px, #a5c5e3 80px, #28323e 125px);
}
.dialog h3 {
    padding: 5px 0 6px;
}
.dialog .window-body {
    display: flex;
    flex-direction: column;
}
.dialog-close {
    position: absolute;
    top: 0;
    right: 3px;
    width: 36px;
    height: 19px;
    display: grid;
    place-items: center;
    border: 1px solid #eaa;
    border-top: 0;
    border-radius: 0 0 3px 3px;
    background: linear-gradient(#c98c88, #9b3b35 50%, #b5625a);
}
.message {
    flex: 1;
    display: flex;
    align-items: center;
    gap: 6px;
    padding: 2px 18px 0;
    background: #fff;
    white-space: nowrap;
}
.dialog-actions {
    display: flex;
    justify-content: flex-end;
    gap: 7px;
    padding: 13px 7px 12px;
}
.dialog-actions button {
    width: 65px;
    height: 24px;
    border: 1px solid #777;
    border-radius: 3px;
    background: linear-gradient(#f2f2f2 50%, #ddd 50%, #cfcfcf);
    box-shadow: inset 0 0 0 1px #fafafa;
}
.dialog-actions .default {
    border-color: #2c83b8;
    box-shadow: inset 0 0 0 1px #4ed1f5;
}
.callout {
    position: absolute;
    left: 656px;
    top: 444px;
}

/* status strip */
.status {
    height: 63px;
    display: flex;
    align-items: flex-start;
    padding: 0 20px 0 3px;
}
.gauge {
    margin-top: 2px;
}
.gauge text {
    font: bold 10px "DejaVu Sans", sans-serif;
    fill: #fff;
}
.gauge .unit {
    font-size: 8px;
}
.defects {
    padding-left: 4px;
}
.defects li {
    height: 19px;
    display: flex;
    align-items: center;
    gap: 8px;
}
.defects li::before, .mes-status li::before {
    content: "";
    width: 9px;
    height: 12px;
    border-radius: 50%;
    background: radial-gradient(circle at 35% 30%, #fff, #ff10c8 30%, #c0008c 80%);
}
.conveyor {
    margin-left: auto;
    padding-top: 9px;
    display: grid;
    gap: 20px;
}
.lane {
    display: flex;
    justify-content: flex-end;
    gap: 7px;
}
.lane i {
    width: 53px;
    height: 10px;
    border: 1px solid #777;
    border-radius: 3px;
    background: #a0a0a0;
}
.out i {
    border-bottom: 2px solid #1f8a2f;
}
.in i {
    border-top: 2px solid #1f8a2f;
}
.flip {
    transform: scaleX(-1);
}

/* panels */
.dock {
    display: grid;
    grid-template-columns: 274fr 749fr;
    gap: 3px;
    height: 248px;
}
.panel {
    display: flex;
    flex-direction: column;
    min-width: 0;
}
.panel-title {
    height: 19px;
    display: flex;
    justify-content: space-between;
    padding: 2px 3px 1px;
    background: #63b1ff;
}
.panel-title button {
    border: 0;
    background: none;
    font: 13px/13px "Liberation Sans", sans-serif;
}
.right .panel-title {
    padding-right: 1px;
}
.tabs {
    display: flex;
    align-items: flex-end;
    height: 25px;
}
.tab {
    height: 21px;
    padding: 0 1px;
    border: 1px solid #8c8c94;
    border-left-width: 0;
    border-bottom: 0;
    background: linear-gradient(#f2f2f2 50%, #ddd 50%, #cfcfcf);
}
.tab:last-child {
    padding: 0 8px;
}
.tab.active {
    height: 23px;
    padding: 0 4px;
    border-left-width: 1px;
    background: #fff;
    margin-bottom: -1px;
    z-index: 1;
}
.mark-page {
    flex: 1;
    margin: 0 2px 4px 0;
    padding: 3px;
    border: 1px solid #8c8c94;
    background: #fff;
}
.mark-view {
    height: 100%;
    display: flex;
    padding: 3px 2px;
    border: 1px solid #ddd;
    border-right: 2px solid #666;
    border-bottom: 2px solid #666;
    background: #f0f0f0;
}
.hatch {
    flex: 1;
    background: repeating-conic-gradient(#767676 0 25%, #9e9e9e 0 50%) 0 0 / 2px 2px;
}
.scroll {
    width: 12px;
    display: flex;
    flex-direction: column;
    justify-content: space-between;
    align-items: center;
    color: #777;
    font: 6px/18px "DejaVu Sans", sans-serif;
}
.scroll.pale {
    color: #c5c5cc;
    background: #e6e6ec;
}
.mes-page {
    flex: 1;
    display: grid;
    grid-template-columns: minmax(0, 265fr) minmax(0, 384fr);
    gap: 4px;
    margin-top: 2px;
    padding: 10px 63px 8px 31px;
    border: 1px solid #666;
}
.mes-status, .mes-errors {
    border: 1px solid #d8dee4;
    border-radius: 2px;
    box-shadow: inset 0 0 0 1px #fafafa;
}
.mes-status {
    padding: 3px 35px;
    font-weight: bold;
}
.mes-status li {
    height: 27px;
    display: flex;
    align-items: center;
    gap: 2px;
}
.mes-status li::before {
    background: radial-gradient(circle at 35% 30%, #fff, #1e90ff 35%, #0a4fae 85%);
}
.mes-errors {
    display: flex;
    flex-direction: column;
    padding: 4px 6px 11px 5px;
}
.mes-errors label {
    height: 19px;
    padding-left: 18px;
    font-weight: bold;
}
.error-box {
    flex: 1;
    display: flex;
    border: 1px solid #a5a5ad;
}
.error-box textarea {
    flex: 1;
    min-width: 0;
    border: 0;
    background: none;
    resize: none;
}
.bottom-tabs {
    display: flex;
    height: 22px;
    margin-top: 1px;
    padding-left: 3px;
    background: #fff;
    border-top: 1px solid #000;
}
.bottom-tabs button {
    height: 19px;
    padding: 0 2px;
    border: 0;
    border-right: 1px solid #aaa;
    background: none;
    color: #777;
    font-size: 9px;
}
.bottom-tabs .active {
    padding: 0 3px;
    color: #000;
    background: #f0f0f0;
    border: 1px solid #000;
    border-width: 0 1px 1px 0;
}

/* right column */
.right {
    gap: 8px;
}
.grow {
    flex: 1;
}
.panel-tools {
    height: 32px;
    display: flex;
    align-items: flex-start;
    padding: 2px 6px 0 2px;
}
.panel-tools label {
    display: flex;
    align-items: center;
    gap: 2px;
    height: 27px;
    width: 54px;
    margin-right: 1px;
}
.panel-tools input {
    width: 10px;
    height: 12px;
}
.save {
    width: 20px;
    height: 26px;
    margin: 0 9px 0 0;
    display: grid;
    place-items: center;
    border: 1px solid #d8dae6;
    background: #f4f4f6;
}
.flat {
    width: 79px;
    height: 31px;
    margin-left: auto;
    border: 1px solid #dcdde6;
    background: #f6f6f6;
}
.flat.narrow {
    width: 52px;
    margin-left: 2px;
}
.flat.last {
    width: 70px;
    margin-right: -6px;
}
.lane-tabs {
    padding-left: 4px;
    height: 26px;
}
.table-page {
    flex: 1;
    display: flex;
    margin: 0 1px 3px 4px;
    padding: 4px 1px 1px 2px;
    border: 1px solid #8c8c94;
    background: #fff;
}
.yield-page {
    padding-bottom: 5px;
    margin-bottom: 0;
}
table {
    width: 100%;
    align-self: flex-start;
    table-layout: fixed;
    border-collapse: collapse;
    text-align: center;
}
th, td {
    height: 20px;
    padding: 0;
    line-height: 16px;
    border-bottom: 1px solid #999;
}
td {
    border-left: 1px solid #999;
}
thead th {
    height: 21px;
    font-weight: normal;
    border: 0;
    border-right: 1px solid #e4e4e4;
    border-bottom: 1px solid #ccc;
    background: linear-gradient(#fff 50%, #f3f4f6 50%);
}
.check-page thead th {
    height: 24px;
}
.check-page td {
    font-weight: 500;
}
.check-page tbody tr:last-child > * {
    border-bottom: 0;
}
.yield-page td {
    font-weight: bold;
}
.blue { color: #00f; }
.green { color: #0f0; }
.amber { color: #ffb400; }
.brown { color: #844200; }
.red { color: #f00; }
.teal { color: #6a9c84; }
.time td { color: #090; }
.expandable {
    position: relative;
}
.expandable button {
    position: absolute;
    left: 4px;
    top: 5px;
    width: 8px;
    height: 10px;
    border: 1px solid #7b8fae;
    background: #dbe7f5;
    font: 8px/7px "Liberation Sans", sans-serif;
}
.scroll.dark {
    flex-shrink: 0;
    color: #444;
    background: #f0f0f0;
    border-left: 1px solid #ccc;
}
.thumb {
    flex: 1;
    width: 11px;
    margin-bottom: 18px;
    display: grid;
    place-items: center;
    border: 1px solid #999;
    border-radius: 2px;
    background: linear-gradient(90deg, #f5f5f5, #c8c8cc);
}

/* task bar */
.taskbar {
    height: 40px;
    display: flex;
    background: #090d15;
    border-top: 1px solid #68717c;
    color: #fff;
}
.taskbar button {
    width: 44px;
    margin-right: 2px;
    display: grid;
    place-items: center;
    border: 0;
    background: none;
}
.taskbar .alert {
    border: 1px solid #a33;
    background: linear-gradient(#1c1216 80%, #a66);
}
.taskbar .open {
    border: 1px solid #555c64;
    background: linear-gradient(135deg, #54575c, #202327 60%, #50545a);
}
.taskbar .light {
    background: linear-gradient(135deg, #aaa, #666 50%, #aaa);
}
.cubes {
    fill: #fff;
    font-size: 9px;
    font-weight: bold;
}
.tray {
    margin-left: auto;
    display: flex;
    align-items: center;
    gap: 6px;
}
.tray > span {
    margin-right: 5px;
    padding-bottom: 6px;
}
.clock {
    display: flex;
    flex-direction: column;
    align-items: center;
    margin-right: 4px;
}
.show-desktop {
    width: 9px;
    border: 1px solid #555;
    background: linear-gradient(135deg, #666, #111);
}
```
